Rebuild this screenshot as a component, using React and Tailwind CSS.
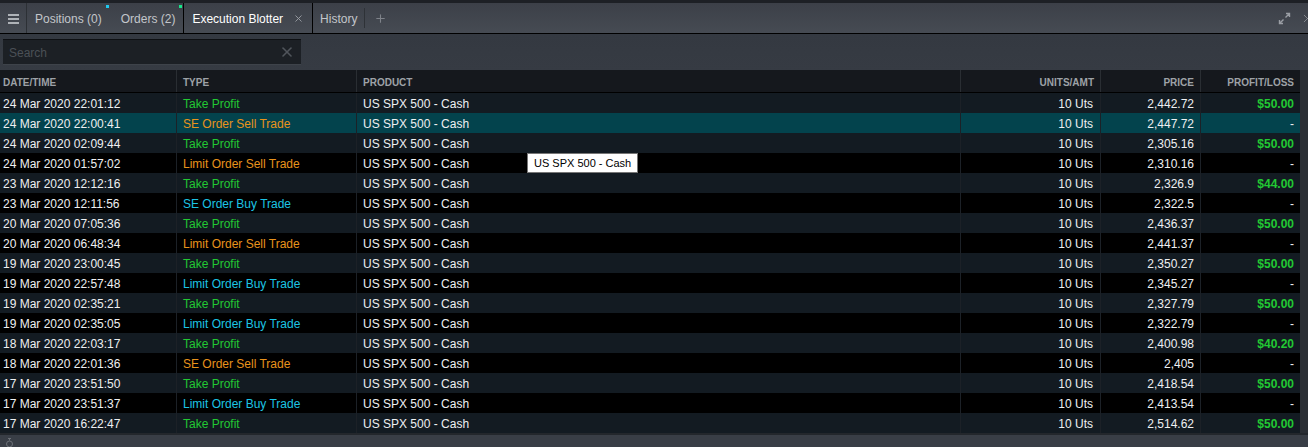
import { Plus, X } from "lucide-react";

const rows = [
  ["24 Mar 2020 22:01:12", "Take Profit", "2,442.72", "$50.00"],
  ["24 Mar 2020 22:00:41", "SE Order Sell Trade", "2,447.72", "-"],
  ["24 Mar 2020 02:09:44", "Take Profit", "2,305.16", "$50.00"],
  ["24 Mar 2020 01:57:02", "Limit Order Sell Trade", "2,310.16", "-"],
  ["23 Mar 2020 12:12:16", "Take Profit", "2,326.9", "$44.00"],
  ["23 Mar 2020 12:11:56", "SE Order Buy Trade", "2,322.5", "-"],
  ["20 Mar 2020 07:05:36", "Take Profit", "2,436.37", "$50.00"],
  ["20 Mar 2020 06:48:34", "Limit Order Sell Trade", "2,441.37", "-"],
  ["19 Mar 2020 23:00:45", "Take Profit", "2,350.27", "$50.00"],
  ["19 Mar 2020 22:57:48", "Limit Order Buy Trade", "2,345.27", "-"],
  ["19 Mar 2020 02:35:21", "Take Profit", "2,327.79", "$50.00"],
  ["19 Mar 2020 02:35:05", "Limit Order Buy Trade", "2,322.79", "-"],
  ["18 Mar 2020 22:03:17", "Take Profit", "2,400.98", "$40.20"],
  ["18 Mar 2020 22:01:36", "SE Order Sell Trade", "2,405", "-"],
  ["17 Mar 2020 23:51:50", "Take Profit", "2,418.54", "$50.00"],
  ["17 Mar 2020 23:51:37", "Limit Order Buy Trade", "2,413.54", "-"],
  ["17 Mar 2020 16:22:47", "Take Profit", "2,514.62", "$50.00"],
];

function typeColor(type) {
  if (type === "Take Profit") return "text-[#22c933]";
  if (type.includes("Sell")) return "text-[#e8931c]";
  return "text-[#1cc4e4]";
}

const cols = "grid grid-cols-[177px_180px_604px_140px_100px_99px]";

function Tab({ label, dot, active, closable }) {
  return (
    <div
      className={
        "relative h-full flex items-center gap-[10px] pt-[2px] " +
        (active
          ? "px-[8px] border-x border-black text-white"
          : "px-[7px] text-[#c3c6ca]")
      }
    >
      <span className="text-[12px]">{label}</span>
      {closable && <X className="w-[11px] h-[11px] text-[#9a9ea4]" strokeWidth={2} />}
      {dot && (
        <span className={"absolute top-[2px] right-[0px] w-[3px] h-[3px] " + dot} />
      )}
    </div>
  );
}

export default function App() {
  return (
    <div className="relative w-[1308px] h-[447px] overflow-hidden flex flex-col bg-[#2c3036] font-['Liberation_Sans',Arial,sans-serif]">
      <div className="h-[3px] bg-[#1d2025]" />

      {/* tab bar */}
      <div className="h-[31px] flex items-center border-b border-black bg-gradient-to-b from-[#3c4048] to-[#464b53]">
        <div className="w-[27px] h-full flex items-center justify-center border-r border-[#2c3035] pt-[2px]">
          <div className="flex flex-col gap-[2px]">
            <span className="block w-[11px] h-[2px] bg-[#aeb2b7]" />
            <span className="block w-[11px] h-[2px] bg-[#aeb2b7]" />
            <span className="block w-[11px] h-[2px] bg-[#aeb2b7]" />
          </div>
        </div>
        <div className="h-full flex items-center pl-[1px]">
          <Tab label="Positions (0)" dot="bg-[#1ec8ee]" />
          <div className="w-[5px]" />
          <Tab label="Orders (2)" dot="bg-[#17e88a]" />
          <div className="w-px" />
          <Tab label="Execution Blotter" active closable />
          <Tab label="History" />
          <div className="w-px h-[20px] bg-[#2e3237]" />
          <Plus className="ml-[9px] mt-[1px] w-[13px] h-[13px] text-[#7f838a]" strokeWidth={2} />
        </div>
        <div className="ml-auto flex items-center gap-[10px] pt-[1px] mr-[-6px]">
          <svg width="13" height="13" viewBox="0 0 13 13" fill="none" stroke="#9a9ea4" strokeWidth="1.4">
            <path d="M7.5 5.5 L11.5 1.5 M8 1.5 H11.5 V5" />
            <path d="M5.5 7.5 L1.5 11.5 M1.5 8 V11.5 H5" />
          </svg>
          <X className="w-[13px] h-[13px] text-[#8d9197]" strokeWidth={1.6} />
        </div>
      </div>

      {/* toolbar */}
      <div className="h-[37px] bg-gradient-to-b from-[#343941] to-[#363b43] px-[3px] pt-[5px]">
        <div className="w-[298px] h-[26px] bg-[#1c2025] border-t border-[#0e1013] border-b border-b-[#3e434a] flex items-center justify-between px-[6px]">
          <span className="text-[12px] text-[#4b5056] pt-[2px]">Search</span>
          <X className="w-[16px] h-[16px] text-[#50555b]" strokeWidth={2.4} />
        </div>
      </div>

      {/* table */}
      <div className="flex">
        <div className="w-[1300px] flex flex-col">
          <div className={cols + " h-[23px] bg-[#15181d] border-b border-black text-[10px] font-bold text-[#9ea2a7]"}>
            <div className="flex items-center pl-[3px] pt-[3px] border-r border-[#2a2e33]">DATE/TIME</div>
            <div className="flex items-center pl-[6px] pt-[3px] border-r border-[#2a2e33]">TYPE</div>
            <div className="flex items-center pl-[6px] pt-[3px] border-r border-[#2a2e33]">PRODUCT</div>
            <div className="flex items-center justify-end pr-[6px] pt-[3px] border-r border-[#2a2e33]">UNITS/AMT</div>
            <div className="flex items-center justify-end pr-[6px] pt-[3px] border-r border-[#2a2e33]">PRICE</div>
            <div className="flex items-center justify-end pr-[6px] pt-[3px]">PROFIT/LOSS</div>
          </div>
          {rows.map(([date, type, price, pl], i) => {
            const bg = i === 1 ? "bg-[#03434d]" : i % 2 === 0 ? "bg-[#131b22]" : "bg-black";
            return (
              <div key={i} className={cols + " h-[20px] text-[12px] text-[#eef0f2] " + bg}>
                <div className="flex items-center pl-[3px] pt-[2px] border-r border-[#1c2127]">{date}</div>
                <div className={"flex items-center pl-[6px] pt-[2px] border-r border-[#1c2127] " + typeColor(type)}>{type}</div>
                <div className="flex items-center pl-[6px] pt-[2px] border-r border-[#1c2127]">US SPX 500 - Cash</div>
                <div className="flex items-center justify-end pr-[7px] pt-[2px] border-r border-[#1c2127]">10 Uts</div>
                <div className="flex items-center justify-end pr-[6px] pt-[2px] border-r border-[#1c2127]">{price}</div>
                <div className={"flex items-center justify-end pr-[6px] pt-[2px] " + (pl === "-" ? "" : "font-bold text-[#22c933]")}>{pl}</div>
              </div>
            );
          })}
        </div>
        <div className="flex-1 bg-[#2a2e34]" />
      </div>

      <div className="h-[2px] bg-[#23272c]" />
      <div className="flex-1 bg-[#393e46] flex items-start pl-[5px] pt-[3px]">
        <svg width="9" height="9" viewBox="0 0 9 9" fill="none" stroke="#6c7077" strokeWidth="1">
          <path d="M4.5 0.5 V2.5 M3 0.5 H6" />
          <circle cx="4.5" cy="6" r="3" />
        </svg>
      </div>

      {/* tooltip */}
      <div className="absolute left-[527px] top-[153px] h-[20px] px-[6px] pt-[1px] flex items-center bg-white border border-[#767676] text-[11px] text-black">
        US SPX 500 - Cash
      </div>
    </div>
  );
}
